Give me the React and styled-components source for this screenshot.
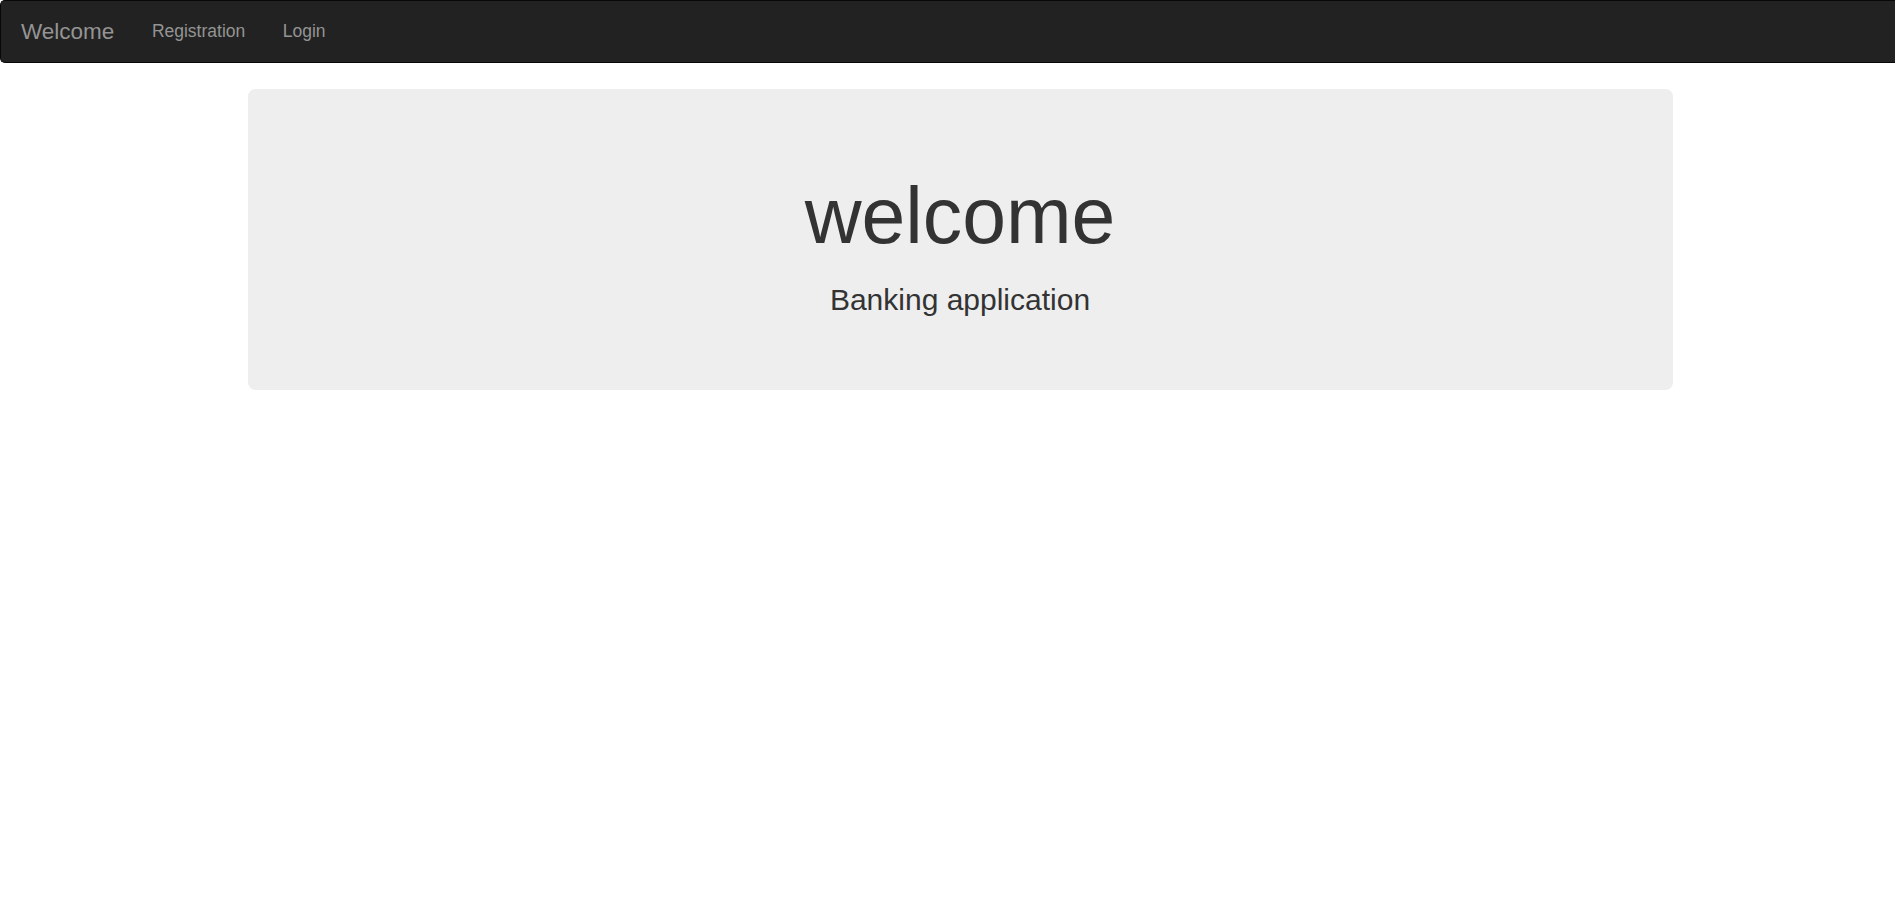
import React from "react";
import styled, { createGlobalStyle } from "styled-components";

const Global = createGlobalStyle`
  * { box-sizing: border-box; }
  html, body { margin: 0; padding: 0; background: #fff; }
  body {
    font-family: "Liberation Sans", Arial, Helvetica, sans-serif;
    font-size: 17.5px;
    line-height: 1.42857;
    color: #333;
  }
`;

const Navbar = styled.nav`
  display: flex;
  align-items: stretch;
  min-height: 63px;
  background: #222;
  border: 1.25px solid #080808;
  border-right: none;
  border-radius: 5px 0 0 5px;
  margin-bottom: 26px;
`;

const Brand = styled.a`
  display: block;
  padding: 17.5px 18.75px 18px 20px;
  font-size: 22.5px;
  line-height: 25px;
  color: #949494;
  text-decoration: none;
`;

const NavList = styled.ul`
  display: flex;
  list-style: none;
  margin: 0;
  padding: 0;
`;

const NavLink = styled.a`
  display: block;
  padding: 18px 18.75px 17px;
  font-size: 17.5px;
  line-height: 25px;
  color: #949494;
  text-decoration: none;
`;

const Container = styled.div`
  width: 1425px;
  margin-left: calc(50% - 700px);
`;

const Jumbotron = styled.div`
  background: #eee;
  border-radius: 7.5px;
  padding: 60px 75px 50px;
  text-align: center;
  color: #333;
`;

const Title = styled.h1`
  margin: 24px 0 19px;
  font-size: 78.75px;
  line-height: 1.1;
  font-weight: 500;
`;

const Lead = styled.p`
  margin: 0 0 18.75px;
  font-size: 30px;
  line-height: 1.42857;
  font-weight: 200;
`;

export default function App() {
  return (
    <>
      <Global />
      <Navbar>
        <Brand href="#">Welcome</Brand>
        <NavList>
          <li><NavLink href="#">Registration</NavLink></li>
          <li><NavLink href="#">Login</NavLink></li>
        </NavList>
      </Navbar>
      <Container>
        <Jumbotron>
          <Title>welcome</Title>
          <Lead>Banking application</Lead>
        </Jumbotron>
      </Container>
    </>
  );
}
